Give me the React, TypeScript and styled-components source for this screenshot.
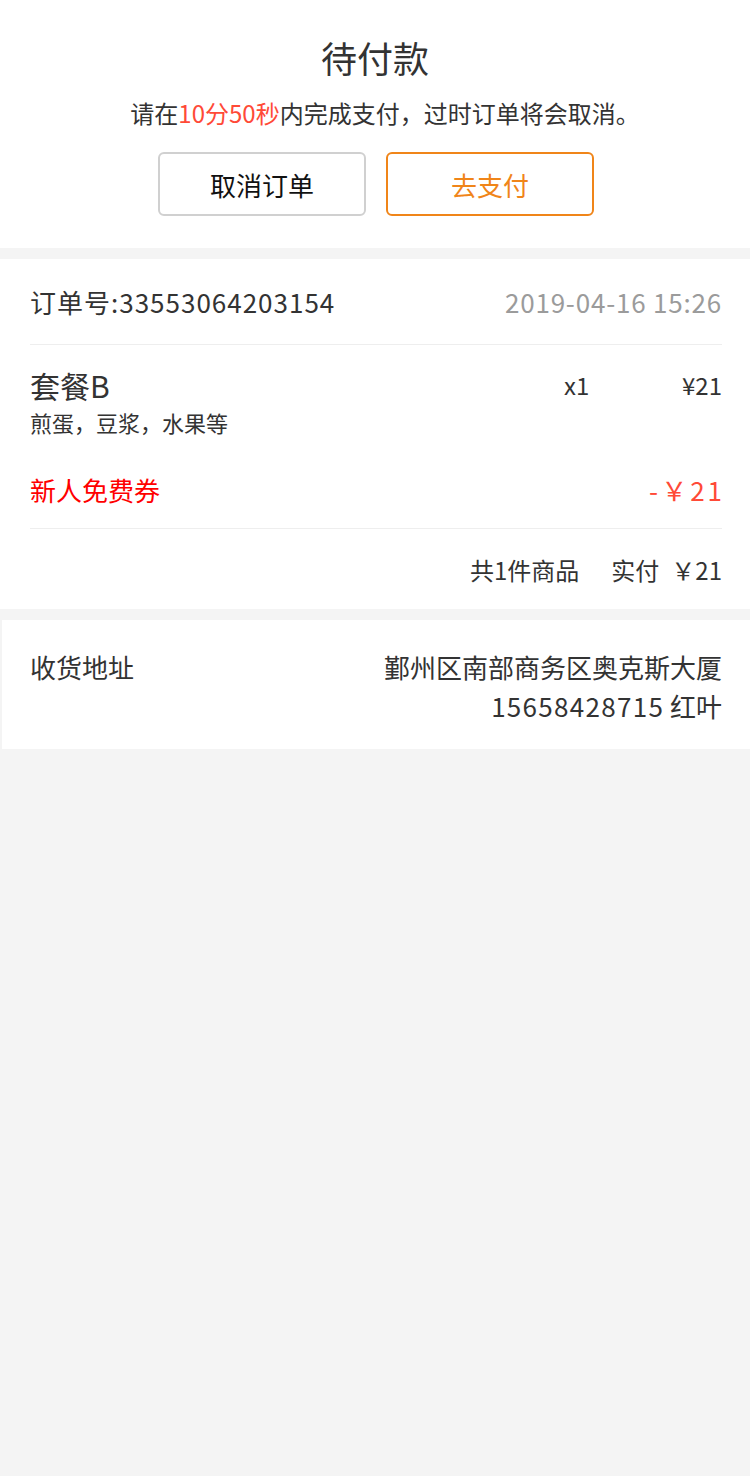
import styled, { createGlobalStyle } from 'styled-components';

const GlobalStyle = createGlobalStyle`
  html, body {
    margin: 0;
    padding: 0;
    background: #f4f4f4;
  }
  body {
    font-family: "Noto Sans CJK SC", "Noto Sans", sans-serif;
    color: #333;
  }
  * { box-sizing: border-box; }
`;

const Page = styled.div`
  width: 750px;
  min-height: 1476px;
  background: #f4f4f4;
`;

const Header = styled.section`
  background: #fff;
  padding: 32px 0 32px;
  margin-bottom: 11px;
  display: flex;
  flex-direction: column;
  align-items: center;
`;

const Title = styled.h1`
  margin: 0;
  font-size: 36px;
  line-height: 50px;
  font-weight: 400;
  color: #333;
`;

const Notice = styled.p`
  margin: 14px 0 0;
  padding-left: 20px;
  font-size: 24px;
  line-height: 34px;
  color: #333;
`;

const Countdown = styled.span`
  color: #ff4a37;
`;

const Actions = styled.div`
  display: flex;
  gap: 20px;
  margin-top: 22px;
  padding-left: 2px;
`;

const ActionButton = styled.button<{ $primary?: boolean }>`
  width: 208px;
  height: 64px;
  border-radius: 6px;
  background: #fff;
  font-family: inherit;
  font-size: 26px;
  border: 2px solid ${(p) => (p.$primary ? '#f08519' : '#d0d0d0')};
  color: ${(p) => (p.$primary ? '#f08519' : '#111')};
  cursor: pointer;
`;

const Card = styled.section<{ $edge?: boolean }>`
  background: #fff;
  padding: 0 28px 0 ${(p) => (p.$edge ? '28px' : '30px')};
  margin-bottom: 11px;
  border-left: ${(p) => (p.$edge ? '2px solid #f4f4f4' : 'none')};
`;

const OrderRow = styled.div`
  height: 86px;
  display: flex;
  align-items: center;
  justify-content: space-between;
  border-bottom: 1px solid #eee;
  font-size: 26px;
`;

const OrderNo = styled.span`
  color: #333;
  letter-spacing: 1px;
`;

const OrderTime = styled.span`
  color: #9b9b9b;
  letter-spacing: 0.8px;
`;

const Items = styled.div`
  padding: 22px 0;
  border-bottom: 1px solid #eee;
`;

const ItemRow = styled.div`
  display: grid;
  grid-template-columns: 1fr 118px auto;
  align-items: start;
`;

const ItemName = styled.div`
  font-size: 30px;
  line-height: 36px;
  color: #333;
`;

const ItemDesc = styled.div`
  font-size: 22px;
  line-height: 32px;
  margin-top: 3px;
  color: #333;
`;

const ItemNum = styled.span`
  font-size: 24px;
  line-height: 36px;
  color: #333;
`;

const CouponRow = styled.div`
  display: flex;
  justify-content: space-between;
  align-items: center;
  margin-top: 36px;
  line-height: 32px;
`;

const CouponName = styled.span`
  font-size: 26px;
  color: #ff0000;
`;

const CouponValue = styled.span`
  font-size: 26px;
  letter-spacing: 3px;
  margin-right: -3px;
  color: #ff4a37;
`;

const TotalRow = styled.div`
  height: 80px;
  display: flex;
  align-items: center;
  justify-content: flex-end;
  font-size: 24px;
  color: #333;
`;

const TotalCount = styled.span`
  margin-right: 32px;
`;

const TotalPrice = styled.span`
  margin-left: 12px;
`;

const AddressRow = styled.div`
  display: flex;
  justify-content: space-between;
  padding: 27px 0 24px;
  font-size: 26px;
  line-height: 39px;
  color: #333;
`;

const AddressText = styled.div`
  text-align: right;
`;

const Phone = styled.span`
  letter-spacing: 1.3px;
`;

export default function App() {
  return (
    <Page>
      <GlobalStyle />
      <Header>
        <Title>待付款</Title>
        <Notice>
          请在<Countdown>10分50秒</Countdown>内完成支付，过时订单将会取消。
        </Notice>
        <Actions>
          <ActionButton>取消订单</ActionButton>
          <ActionButton $primary>去支付</ActionButton>
        </Actions>
      </Header>

      <Card>
        <OrderRow>
          <OrderNo>订单号:33553064203154</OrderNo>
          <OrderTime>2019-04-16 15:26</OrderTime>
        </OrderRow>
        <Items>
          <ItemRow>
            <div>
              <ItemName>套餐B</ItemName>
              <ItemDesc>煎蛋，豆浆，水果等</ItemDesc>
            </div>
            <ItemNum>x1</ItemNum>
            <ItemNum>¥21</ItemNum>
          </ItemRow>
          <CouponRow>
            <CouponName>新人免费券</CouponName>
            <CouponValue>-￥21</CouponValue>
          </CouponRow>
        </Items>
        <TotalRow>
          <TotalCount>共1件商品</TotalCount>
          <span>实付</span>
          <TotalPrice>￥21</TotalPrice>
        </TotalRow>
      </Card>

      <Card $edge>
        <AddressRow>
          <span>收货地址</span>
          <AddressText>
            鄞州区南部商务区奥克斯大厦
            <br />
            <Phone>15658428715</Phone> 红叶
          </AddressText>
        </AddressRow>
      </Card>
    </Page>
  );
}
